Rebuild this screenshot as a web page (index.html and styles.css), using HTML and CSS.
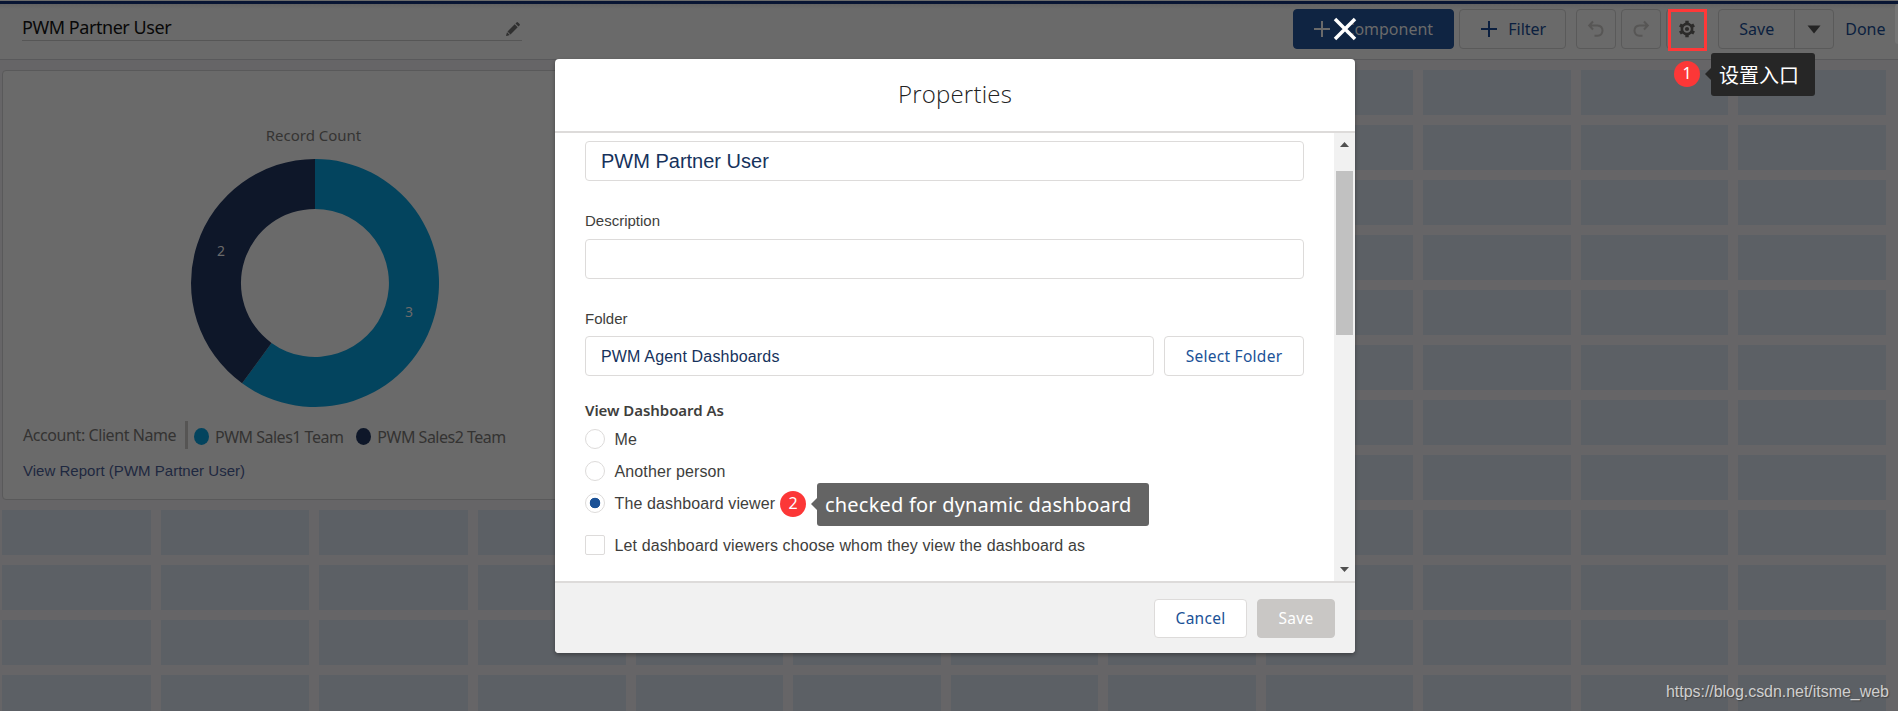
FILE: index.html
```html
<!DOCTYPE html>
<html lang="en"><head><meta charset="utf-8"><title>Dashboard Properties</title><link rel="stylesheet" href="styles.css"></head>
<body>
<main class="page">
<header class="toolbar">
 <div class="name"><span>PWM Partner User</span><svg width="14" height="14" viewBox="0 0 14 14" fill="#303030"><path d="M1.5 9.5 8.7 2.3 11.7 5.3 4.5 12.5ZM9.5 1.5 10.8.3Q11.4-.1 12 .4L13.6 2Q14.1 2.6 13.7 3.2L12.5 4.5ZM1 10.2 3.8 13 .6 13.9Q0 14 .1 13.4Z"/></svg></div>
 <div class="actions">
  <div class="btn primary"><svg class="plus" viewBox="0 0 16 16"><path d="M8 0V16M0 8H16"/></svg><span>Component</span></div>
  <div class="btn filter"><svg class="plus" viewBox="0 0 16 16"><path d="M8 0V16M0 8H16"/></svg><span>Filter</span></div>
  <div class="btn icon undo"><svg width="18" height="18" viewBox="0 0 18 18"><path d="M6 1.5 2.2 5.5 6 9.5M2.5 5.5H10.5Q15.5 6 15.5 10.7Q15.2 15.3 10.5 15.8H7.5"/></svg></div>
  <div class="btn icon redo"><svg width="18" height="18" viewBox="0 0 18 18"><path d="M12 1.5 15.8 5.5 12 9.5M15.5 5.5H7.5Q2.5 6 2.5 10.7Q2.8 15.3 7.5 15.8H10.5"/></svg></div>
  <div class="btn icon gear"><svg width="18" height="18" viewBox="-9 -9 18 18"><circle r="5.1" fill="none" stroke="#2c2b2a" stroke-width="2.6"/><circle r="2.1" fill="#2c2b2a"/><path d="M0-8.3V-5.5M0 8.3V5.5M7.1-4.1 4.8-2.8M7.1 4.1 4.8 2.8M-7.1-4.1-4.8-2.8M-7.1 4.1-4.8 2.8" stroke="#2c2b2a" stroke-width="3.4"/></svg></div>
  <div class="btn savegroup"><span class="save">Save</span><span class="drop"><svg width="14" height="9" viewBox="0 0 14 9"><path d="M.5.5H13.5L7 8.5Z" fill="#242424"/></svg></span></div>
  <span class="done">Done</span>
 </div>
</header>
<section class="canvas" id="canvas">
 <article class="card">
  <h2>Record Count</h2>
  <svg class="donut" width="250" height="250" viewBox="-125 -125 250 250">
   <path fill="#03445e" d="M0-124A124 124 0 1 1-72.9 100.3L-43.5 59.9A74 74 0 1 0 0-74Z"/>
   <path fill="#0e1729" d="M0-124A124 124 0 0 0-72.9 100.3L-43.5 59.9A74 74 0 0 1 0-74Z"/>
   <text x="-94" y="-27">2</text><text x="94" y="34">3</text>
  </svg>
  <div class="legend"><span class="field">Account: Client Name</span><i class="dot cyan"></i><span class="team">PWM Sales1 Team</span><i class="dot navy"></i><span class="team">PWM Sales2 Team</span></div>
  <div class="report">View Report (PWM Partner User)</div>
 </article>
</section>
</main>
<div class="watermark">https://blog.csdn.net/itsme_web</div>
<div class="edge"></div>
<svg class="close" width="24" height="24" viewBox="0 0 24 24"><path d="M2 2 22 22M22 2 2 22"/></svg>
<section class="modal">
 <h1><span>Properties</span></h1>
 <div class="body">
  <div class="form">
   <div class="input big">PWM Partner User</div>
   <label class="l1">Description</label>
   <div class="input"></div>
   <label class="l2">Folder</label>
   <div class="row"><div class="input grow">PWM Agent Dashboards</div><div class="select">Select Folder</div></div>
   <div class="legendtitle"><span>View Dashboard As</span></div>
   <div class="opt"><i class="radio"></i><span>Me</span></div>
   <div class="opt"><i class="radio"></i><span>Another person</span></div>
   <div class="opt"><i class="radio on"></i><span>The dashboard viewer</span></div>
   <div class="opt check"><i class="box"></i><span>Let dashboard viewers choose whom they view the dashboard as</span></div>
  </div>
  <div class="scroll"><svg width="9" height="5" viewBox="0 0 9 5"><path d="M0 5H9L4.5 0Z"/></svg><i class="thumb"></i><svg class="down" width="9" height="5" viewBox="0 0 9 5"><path d="M0 0H9L4.5 5Z"/></svg></div>
 </div>
 <footer><div class="cancel">Cancel</div><div class="save2">Save</div></footer>
</section>
<div class="frame"></div>
<div class="badge one">1</div><div class="tip tip1"><span>设置入口</span></div>
<div class="badge two">2</div><div class="tip tip2"><span>checked for dynamic dashboard</span></div>
<script src="grid.js"></script>
</body></html>
```
FILE: styles.css
```css
*{box-sizing:border-box}
body{margin:0;width:1898px;height:711px;overflow:hidden;position:relative;font-family:"Liberation Sans",Arial,sans-serif;background:#666567}
svg{display:block;flex:none}
.page{height:711px;overflow:hidden;border-top:1px solid #6a6a6a}
.toolbar{height:59px;border-top:3px solid #081533;border-bottom:1px solid #59595b;background:linear-gradient(#626262,#6a6a6a 5px);display:flex;justify-content:space-between;font-family:"Noto Sans",sans-serif}
.name{margin-left:22px;width:500px;height:37px;border-bottom:1px solid #565656;display:flex;justify-content:space-between;align-items:center;padding:0 2px 0 0;font-size:18px;color:#080808}
.name svg{margin-top:14px}
.name span{margin-top:10px;letter-spacing:-.45px}
.actions{display:flex;padding:5px 12.5px 0 0;color:#0b1f3f;font-size:16px}
.btn{height:40px;border:1px solid #5a5a5a;border-radius:4px;display:flex;align-items:center;justify-content:center}
.plus{width:16px;height:16px;fill:none;stroke:currentColor;stroke-width:2}
.primary{width:161px;background:#0f2442;border-color:#0f2442;color:#6a6a6a;gap:14px;margin-right:5px}
.filter{width:107px;gap:11px;margin-right:10px;padding-left:2px}
.icon{width:40px;margin-right:5px}
.undo svg,.redo svg{fill:none;stroke:#575655;stroke-width:2}
.gear{margin-right:12px;padding-left:1px}
.savegroup{width:116px;margin-right:11px}
.save{flex:1;text-align:center}
.drop{width:39px;height:38px;border-left:1px solid #5a5a5a;display:flex;align-items:center;justify-content:center}
.done{line-height:40px}
.canvas{display:grid;grid-template-columns:repeat(3,148.7px) repeat(9,1fr);grid-auto-rows:45px;gap:10px;padding:10px 12px 0 2px;height:651px;overflow:hidden}
.cell{background:#5c6065}
.card{grid-column:1/5;grid-row:1/9;background:#6a6a6a;border:1px solid #59595a;border-radius:4px;display:flex;flex-direction:column;font-family:"Noto Sans",sans-serif;padding:0 20px}
.card h2{margin:52px 0 0;width:581px;text-align:center;font-weight:400;font-size:15px;line-height:24px;color:#353433}
.donut{margin:11px 0 0 167px}
.donut text{font-size:14px;fill:#6a6a6a;text-anchor:middle}
.legend{height:30px;margin-top:12px;display:flex;align-items:center;font-size:16px;color:#343332}
.field{width:165px;border-right:3px solid #565554;line-height:28px;white-space:nowrap;letter-spacing:-.42px}
.team{letter-spacing:-.5px;padding-top:3px;white-space:nowrap}
.dot{width:15px;height:17px;border-radius:50%;margin:2px 6px 0 6px;flex:none}
.cyan{background:#03445e}.navy{background:#0e1729;margin-left:13px}
.report{font-family:"Liberation Sans",sans-serif;font-size:15px;letter-spacing:.02px;color:#1e2840;margin-top:12px}
.watermark{position:absolute;left:1666px;top:683px;font-size:16px;letter-spacing:-.04px;color:#cfcfcf;text-shadow:1px 1px 1px #444}
.edge{position:absolute;left:1895px;top:4px;width:3px;height:40px;background:#757575;border-radius:3px 0 0 3px}
.close{position:absolute;left:1333px;top:17px;fill:none;stroke:#fff;stroke-width:3.5}
.modal{position:absolute;left:555px;top:59px;width:800px;height:594px;background:#fff;border-radius:4px;box-shadow:0 2px 4px #0005;overflow:hidden;display:flex;flex-direction:column}
.modal h1{margin:0;height:74px;border-bottom:2px solid #dddbda;font:300 24px/70px "Open Sans",sans-serif;text-align:center;color:#222;letter-spacing:.2px}
.body{height:448px;display:flex}
.form{width:779px;padding:8px 30px 0;color:#3e3e3c;font-size:16px}
.input{height:40px;border:1px solid #dddbda;border-radius:4px;padding-left:15px;line-height:40px;color:#16325c;letter-spacing:.17px}
.big{font-size:20px;letter-spacing:0;line-height:38px}
.form label{display:block;font-size:15px}
.l1{margin-top:30px;height:28px;line-height:20px}
.l2{margin-top:31px;height:26px;line-height:18px}
.row{display:flex;gap:10px}.grow{flex:1}
.select,.cancel,.save2{border:1px solid #dddbda;border-radius:4px;font-family:"Noto Sans",sans-serif;font-size:15.5px;letter-spacing:.27px;color:#1b5297;text-align:center;background:#fff}
.select{width:140px;height:40px;line-height:39px}
.legendtitle{font:600 15px/20px "Noto Sans",sans-serif;margin:24px 0 9px;letter-spacing:-.05px}
.opt{display:flex;align-items:center;gap:9.5px;height:20px;margin-bottom:12px;white-space:nowrap;letter-spacing:.12px}
.opt span{padding-top:2px}
.radio,.box{width:20px;height:20px;border:1px solid #dddbda;border-radius:50%;flex:none}
.box{border-radius:2px}.on{background:radial-gradient(circle,#1b5297 0 5px,#fff 5.6px)}
.check{margin-top:22px}
.scroll{width:21px;background:#f1f1f1;display:flex;flex-direction:column;align-items:center;padding:9px 0;fill:#505050}
.thumb{width:17px;height:164px;background:#c1c1c1;margin-top:24px}
.down{margin-top:auto}
footer{height:72px;border-top:2px solid #dddbda;background:#f1f1f1;display:flex;justify-content:flex-end;gap:10px;padding:16px 20px 0 0}
.cancel,.save2{width:93px;height:39px;line-height:37px}
.save2{width:78px;background:#c9c7c5;border-color:#c9c7c5;color:#fff}
.frame{position:absolute;left:1668px;top:9px;width:39px;height:42px;border:3px solid #ff3838}
.badge{position:absolute;width:26px;height:26px;border-radius:50%;background:#fc3737;color:#fff;font:16px/24px "Noto Sans",sans-serif;text-align:center}
.one{left:1674px;top:61px}.two{left:780px;top:491px}
.tip{position:absolute;height:43px;border-radius:3px;color:#fff;font:20px/43px "Noto Sans","Noto Sans CJK SC",sans-serif;padding-left:8px;white-space:nowrap}
.tip:before{content:"";position:absolute;left:-6px;top:15px;border:6px solid transparent;border-left:0;border-right-color:inherit}
.tip1{left:1711px;top:53px;width:104px;background:#262626;border-color:#262626;line-height:45px}
.tip2{left:817px;top:483px;width:332px;background:#646464;border-color:#646464;letter-spacing:.2px}
```
FILE: grid.js
```js
const canvas = document.getElementById('canvas');
for (let row = 1; row <= 12; row++) {
  for (let col = row <= 8 ? 5 : 1; col <= 12; col++) {
    const cell = document.createElement('div');
    cell.className = 'cell';
    cell.style.gridRow = row;
    cell.style.gridColumn = col;
    canvas.append(cell);
  }
}
```
